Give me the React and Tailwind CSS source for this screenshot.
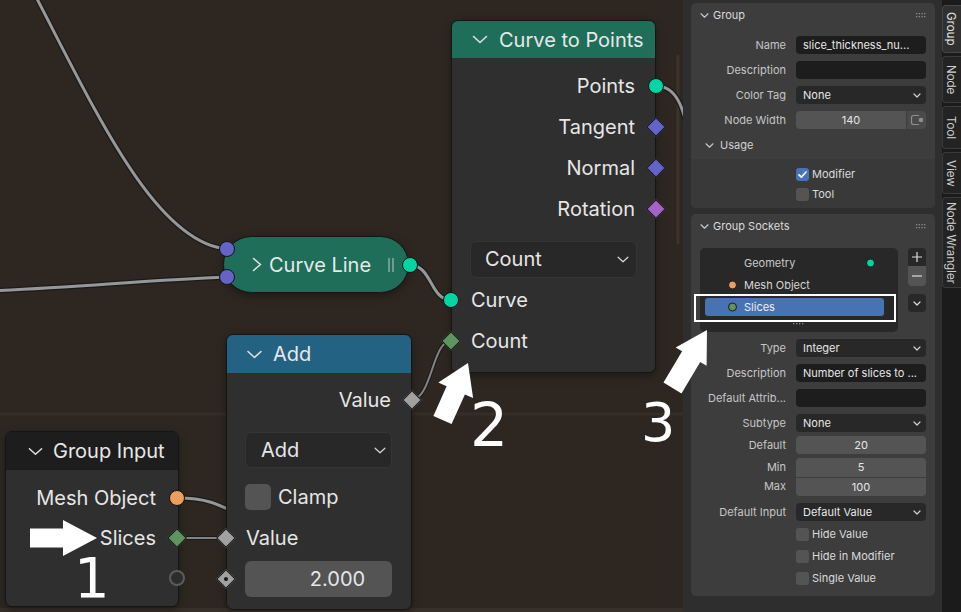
const SOCKET = {
  geo: 'bg-[#00d6a3]',
  vec: 'bg-[#6464c8]',
  rot: 'bg-[#a563c7]',
  int: 'bg-[#5f9460]',
  float: 'bg-[#a1a1a1]',
  obj: 'bg-[#ed9e5c]',
}

function Circle({ color, out }) {
  return (
    <span
      className={`absolute top-1/2 h-[16px] w-[16px] -translate-y-1/2 rounded-full border border-[#141414] ${color} ${out ? 'right-[-9px]' : 'left-[-9px]'}`}
    />
  )
}

function Diamond({ color, out, dot }) {
  return (
    <span
      className={`absolute top-1/2 h-[14px] w-[14px] -translate-y-1/2 rotate-45 border border-[#141414] ${color} ${out ? 'right-[-8px]' : 'left-[-8px]'}`}
    >
      {dot && <span className="absolute left-[4px] top-[4px] h-[4px] w-[4px] rounded-full bg-[#1a1a1a]" />}
    </span>
  )
}

function ChevronDown({ className }) {
  return (
    <svg viewBox="0 0 16 9" className={className} fill="none" stroke="currentColor" strokeWidth="1.6" strokeLinecap="round" strokeLinejoin="round">
      <path d="M1.5 1.5l6.5 6 6.5-6" />
    </svg>
  )
}

function NodeMenu({ label, className }) {
  return (
    <div className={`flex items-center justify-between rounded-[6px] border border-[#353535] bg-[#282828] text-[20px] ${className}`}>
      <span>{label}</span>
      <ChevronDown className="h-[7px] w-[12px] text-[#d8d8d8]" />
    </div>
  )
}

function Links() {
  const links = [
    'M35 -5 C95 110, 155 243, 227 249',
    'M-10 291 C80 287, 150 280, 227 277',
    'M410 265 C432 265, 430 300, 451 300',
    'M656 86 C676 86, 684 105, 692 150',
    'M177 498 C205 498, 215 502, 250 520',
  ]
  const thin = ['M411 400 C432 400, 432 341, 451 341', 'M177 538 L226 538']
  return (
    <svg className="absolute inset-0" width="683" height="612">
      <line x1="0" y1="414" x2="683" y2="414" stroke="#352d27" strokeWidth="3" />
      <rect x="0" y="608" width="683" height="4" fill="#372f29" />
      <line x1="678" y1="56" x2="678" y2="243" stroke="#3b332c" strokeWidth="3" strokeLinecap="round" />
      {links.map((d) => (
        <g key={d} fill="none">
          <path d={d} stroke="#1a1a1a" strokeWidth="5.5" />
          <path d={d} stroke="#979797" strokeWidth="3" />
        </g>
      ))}
      {thin.map((d) => (
        <g key={d} fill="none">
          <path d={d} stroke="#1a1a1a" strokeWidth="4" />
          <path d={d} stroke="#828282" strokeWidth="2" />
        </g>
      ))}
    </svg>
  )
}

function CurveLine() {
  return (
    <div className="absolute left-[223px] top-[236px] flex h-[57px] w-[186px] items-center rounded-full border border-[#141414] bg-[#1e6e5a] pl-[28px] text-[20px] text-[#e8e8e8] shadow-[0_3px_8px_rgba(0,0,0,0.35)]">
      <svg viewBox="0 0 10 15" className="h-[15px] w-[10px]" fill="none" stroke="#e0e0e0" strokeWidth="1.6" strokeLinecap="round" strokeLinejoin="round">
        <path d="M1.5 1.5l7 6-7 6" />
      </svg>
      <span className="ml-[7px]">Curve Line</span>
      <span className="ml-[17px] flex h-[14px] gap-[2px]">
        <span className="w-[2px] bg-[#6e9d90]" />
        <span className="w-[2px] bg-[#6e9d90]" />
      </span>
      <span className={`absolute left-[-5px] top-[4px] h-[16px] w-[16px] rounded-full border border-[#141414] ${SOCKET.vec}`} />
      <span className={`absolute left-[-5px] top-[32px] h-[16px] w-[16px] rounded-full border border-[#141414] ${SOCKET.vec}`} />
      <span className={`absolute right-[-10px] top-[20px] h-[16px] w-[16px] rounded-full border border-[#141414] ${SOCKET.geo}`} />
    </div>
  )
}

function CurveToPoints() {
  const outs = [
    ['Points', <Circle key="c" color={SOCKET.geo} out />],
    ['Tangent', <Diamond key="d" color={SOCKET.vec} out />],
    ['Normal', <Diamond key="d" color={SOCKET.vec} out />],
    ['Rotation', <Diamond key="d" color={SOCKET.rot} out />],
  ]
  return (
    <div className="absolute left-[451px] top-[20px] flex h-[353px] w-[205px] flex-col rounded-[7px] border border-[#151515] bg-[#2f2f2f] text-[20px] shadow-[0_3px_8px_rgba(0,0,0,0.35)]">
      <div className="flex h-[37px] items-center rounded-t-[6px] bg-[#1e6e5a] pl-[20px] text-[#e8e8e8]">
        <ChevronDown className="h-[9px] w-[16px] text-[#e0e0e0]" />
        <span className="ml-[11px]">Curve to Points</span>
      </div>
      <div className="flex flex-col pt-[7.5px]">
        {outs.map(([label, sock]) => (
          <div key={label} className="relative flex h-[41px] items-center justify-end pr-[20px]">
            {label}
            {sock}
          </div>
        ))}
        <div className="h-[50px] px-[18px] pt-[11px]">
          <NodeMenu label="Count" className="h-[37px] pl-[14px] pr-[7px]" />
        </div>
        <div className="relative flex h-[41px] items-center pl-[19px]">
          Curve
          <Circle color={SOCKET.geo} />
        </div>
        <div className="relative flex h-[41px] items-center pl-[19px]">
          Count
          <Diamond color={SOCKET.int} />
        </div>
      </div>
    </div>
  )
}

function AddNode() {
  return (
    <div className="absolute left-[226px] top-[334px] flex h-[276px] w-[186px] flex-col rounded-[7px] border border-[#151515] bg-[#2f2f2f] text-[20px] shadow-[0_3px_8px_rgba(0,0,0,0.35)]">
      <div className="flex h-[38px] items-center rounded-t-[6px] bg-[#246283] pl-[19px] text-[#e8e8e8]">
        <ChevronDown className="h-[9px] w-[17px] text-[#e0e0e0]" />
        <span className="ml-[10px]">Add</span>
      </div>
      <div className="flex flex-col pt-[6.5px]">
        <div className="relative flex h-[41px] items-center justify-end pr-[20px]">
          Value
          <Diamond color={SOCKET.float} out />
        </div>
        <NodeMenu label="Add" className="ml-[18px] mr-[19px] mt-[11.5px] h-[36px] pl-[15px] pr-[5px]" />
        <div className="ml-[18px] mt-[16px] flex h-[26px] items-center">
          <span className="h-[26px] w-[26px] rounded-[5px] bg-[#545454]" />
          <span className="ml-[7px]">Clamp</span>
        </div>
        <div className="relative mt-[7.5px] flex h-[41px] items-center pl-[19px]">
          Value
          <Diamond color={SOCKET.float} />
        </div>
        <div className="relative ml-[18px] mr-[19px] mt-[2.5px] flex h-[36px] items-center justify-center rounded-[6px] bg-[#545454] pl-[38px]">
          2.000
          <span className={`absolute left-[-26px] top-1/2 h-[14px] w-[14px] -translate-y-1/2 rotate-45 border border-[#141414] ${SOCKET.float}`}>
            <span className="absolute left-[4px] top-[4px] h-[4px] w-[4px] rounded-full bg-[#1a1a1a]" />
          </span>
        </div>
      </div>
    </div>
  )
}

function GroupInput() {
  return (
    <div className="absolute left-[5px] top-[431px] flex h-[176px] w-[174px] flex-col rounded-[7px] border border-[#151515] bg-[#2f2f2f] text-[20px] shadow-[0_3px_8px_rgba(0,0,0,0.35)]">
      <div className="flex h-[38px] items-center rounded-t-[6px] bg-[#1d1d1d] pl-[22px] text-[#e8e8e8]">
        <ChevronDown className="h-[9px] w-[15px] text-[#e0e0e0]" />
        <span className="ml-[10px]">Group Input</span>
      </div>
      <div className="flex flex-col pt-[7.5px]">
        <div className="relative flex h-[40px] items-center justify-end pr-[22px]">
          Mesh Object
          <span className={`absolute right-[-7px] top-1/2 h-[16px] w-[16px] -translate-y-1/2 rounded-full border border-[#141414] ${SOCKET.obj}`} />
        </div>
        <div className="relative flex h-[40px] items-center justify-end pr-[22px]">
          Slices
          <span className={`absolute right-[-6px] top-1/2 h-[14px] w-[14px] -translate-y-1/2 rotate-45 border border-[#141414] ${SOCKET.int}`} />
        </div>
        <div className="relative h-[40px]">
          <span className="absolute right-[-7px] top-1/2 h-[16px] w-[16px] -translate-y-1/2 rounded-full border-2 border-[#5c5c5c] bg-[#2c2c2c]" />
        </div>
      </div>
    </div>
  )
}

function NodeCanvas() {
  return (
    <div className="relative h-full w-[683px] shrink-0 overflow-hidden bg-[#2e2721]">
      <Links />
      <CurveLine />
      <CurveToPoints />
      <AddNode />
      <GroupInput />
    </div>
  )
}

function SmallChevron() {
  return (
    <svg viewBox="0 0 9 5" className="h-[5px] w-[9px]" fill="none" stroke="#c8c8c8" strokeWidth="1.2" strokeLinecap="round" strokeLinejoin="round">
      <path d="M1 0.8l3.5 3.4 3.5-3.4" />
    </svg>
  )
}

function Grip({ className }) {
  const dots = []
  for (let i = 0; i < 4; i++) {
    for (let j = 0; j < 2; j++) dots.push(<rect key={`${i}-${j}`} x={i * 2.7} y={j * 3} width="1.3" height="1.3" fill="#8c8c8c" />)
  }
  return (
    <svg width="10" height="5" viewBox="0 0 10 5" className={className}>
      {dots}
    </svg>
  )
}

function PanelHeader({ title }) {
  return (
    <div className="flex h-[24px] items-center pl-[9px] pr-[9px] text-[#dadada]">
      <SmallChevron />
      <span className="ml-[4px]">{title}</span>
      <Grip className="ml-auto" />
    </div>
  )
}

function PropRow({ label, children, className = '' }) {
  return (
    <div className={`flex h-[18px] items-center ${className}`}>
      <span className="w-[95px] whitespace-nowrap text-right text-[#c6c6c6]">{label}</span>
      <div className="ml-[10px] w-[130px]">{children}</div>
    </div>
  )
}

function TextBox({ children }) {
  return <div className="h-[18px] rounded-[4px] bg-[#1d1d1d] px-[7px] leading-[18px] text-[#e6e6e6]">{children}</div>
}

function Menu({ children }) {
  return (
    <div className="flex h-[18px] items-center justify-between rounded-[4px] bg-[#282828] pl-[7px] pr-[5px] text-[#e6e6e6]">
      <span>{children}</span>
      <svg viewBox="0 0 8 5" className="h-[5px] w-[8px]" fill="none" stroke="#d0d0d0" strokeWidth="1.2" strokeLinecap="round" strokeLinejoin="round">
        <path d="M1 1l3 3 3-3" />
      </svg>
    </div>
  )
}

function NumBox({ children, className = 'rounded-[4px]' }) {
  return <div className={`h-[18px] bg-[#545454] text-center leading-[18px] text-[#e6e6e6] ${className}`}>{children}</div>
}

function Check({ children, checked, h = 'h-[20px]' }) {
  return (
    <div className={`flex items-center pl-[105px] ${h}`}>
      {checked ? (
        <span className="flex h-[13px] w-[13px] items-center justify-center rounded-[3px] bg-[#4772b3]">
          <svg viewBox="0 0 13 13" className="h-[13px] w-[13px]" fill="none" stroke="#fff" strokeWidth="1.7" strokeLinecap="round" strokeLinejoin="round">
            <path d="M3 6.8l2.4 2.4L10 4" />
          </svg>
        </span>
      ) : (
        <span className="h-[13px] w-[13px] rounded-[3px] bg-[#545454]" />
      )}
      <span className="ml-[3px] text-[#dadada]">{children}</span>
    </div>
  )
}

function GroupPanel() {
  return (
    <section className="flex h-[205px] flex-col rounded-[5px] bg-[#3d3d3d]">
      <PanelHeader title="Group" />
      <div className="mt-[9px] flex flex-col gap-[7px]">
        <PropRow label="Name">
          <TextBox>slice_thickness_nu...</TextBox>
        </PropRow>
        <PropRow label="Description">
          <TextBox />
        </PropRow>
        <PropRow label="Color Tag">
          <Menu>None</Menu>
        </PropRow>
        <PropRow label="Node Width">
          <div className="flex gap-[1px]">
            <NumBox className="flex-1 rounded-l-[4px]">140</NumBox>
            <div className="flex h-[18px] w-[19px] items-center justify-center rounded-r-[4px] bg-[#4a4a4a]">
              <svg viewBox="0 0 14 12" className="h-[12px] w-[14px]" fill="none">
                <path d="M9 1.5H3.5a2 2 0 0 0-2 2v5a2 2 0 0 0 2 2H9" stroke="#8e8e8e" strokeWidth="1.2" />
                <circle cx="11" cy="6" r="2.3" fill="#8e8e8e" />
              </svg>
            </div>
          </div>
        </PropRow>
      </div>
      <div className="mt-[4px] flex h-[24px] items-center pl-[14px] text-[#d0d0d0]">
        <SmallChevron />
        <span className="ml-[6px]">Usage</span>
      </div>
      <div className="mt-[2px] flex flex-1 flex-col rounded-b-[5px] bg-[#393939] pt-[5px]">
        <Check checked>Modifier</Check>
        <Check>Tool</Check>
      </div>
    </section>
  )
}

function SocketList() {
  return (
    <div className="relative h-[84px] w-[198px] rounded-[5px] bg-[#282828] pt-[4px]">
      <div className="relative mx-[5px] flex h-[22px] items-center pl-[39px] text-[#c8c8c8]">
        Geometry
        <span className="absolute left-[161px] top-1/2 h-[9px] w-[9px] -translate-y-1/2 rounded-full border border-[#1a1a1a] bg-[#00d6a3]" />
      </div>
      <div className="relative mx-[5px] flex h-[22px] items-center pl-[39px] text-[#d6d6d6]">
        <span className="absolute left-[23px] top-1/2 h-[9px] w-[9px] -translate-y-1/2 rounded-full border border-[#1a1a1a] bg-[#ed9e5c]" />
        Mesh Object
      </div>
      <div className="mx-[5px] flex h-[22px] items-center">
        <div className="relative flex h-[18px] w-[179px] items-center rounded-[3px] bg-[#4772b3] pl-[39px] text-[#f0f0f0]">
          <span className="absolute left-[23px] top-1/2 h-[9px] w-[9px] -translate-y-1/2 rounded-full border border-[#1a1a1a] bg-[#5f9460]" />
          Slices
        </div>
      </div>
      <svg width="12" height="2" viewBox="0 0 12 2" className="absolute left-[93px] top-[75px]">
        {[0, 1, 2, 3].map((i) => (
          <rect key={i} x={i * 3} y="0" width="1.3" height="1.3" fill="#8c8c8c" />
        ))}
      </svg>
    </div>
  )
}

function SocketsPanel() {
  return (
    <section className="flex h-[382px] flex-col rounded-[5px] bg-[#3d3d3d]">
      <PanelHeader title="Group Sockets" />
      <div className="mt-[10px] flex pl-[9px]">
        <SocketList />
        <div className="ml-[10px] flex w-[18px] flex-col">
          <div className="flex h-[18px] items-center justify-center rounded-t-[4px] bg-[#282828]">
            <svg viewBox="0 0 10 10" className="h-[10px] w-[10px]" stroke="#dcdcdc" strokeWidth="1.2">
              <path d="M5 0v10M0 5h10" />
            </svg>
          </div>
          <div className="flex h-[20px] items-center justify-center rounded-b-[4px] bg-[#545454]">
            <svg viewBox="0 0 10 2" className="h-[2px] w-[10px]" stroke="#dcdcdc" strokeWidth="1.2">
              <path d="M0 1h10" />
            </svg>
          </div>
          <div className="mt-[8px] flex h-[18px] items-center justify-center rounded-[4px] bg-[#282828]">
            <svg viewBox="0 0 8 5" className="h-[5px] w-[8px]" fill="none" stroke="#dcdcdc" strokeWidth="1.2" strokeLinecap="round" strokeLinejoin="round">
              <path d="M1 1l3 3 3-3" />
            </svg>
          </div>
        </div>
      </div>
      <div className="mt-[7px] flex flex-col gap-[7px]">
        <PropRow label="Type">
          <Menu>Integer</Menu>
        </PropRow>
        <PropRow label="Description">
          <TextBox>Number of slices to ...</TextBox>
        </PropRow>
        <PropRow label="Default Attrib...">
          <TextBox />
        </PropRow>
        <PropRow label="Subtype">
          <Menu>None</Menu>
        </PropRow>
      </div>
      <PropRow className="mt-[4px]" label="Default">
        <NumBox>20</NumBox>
      </PropRow>
      <div className="mt-[4px] flex">
        <div className="flex w-[95px] flex-col text-right text-[#c6c6c6]">
          <span className="h-[19px] leading-[19px]">Min</span>
          <span className="h-[19px] leading-[19px]">Max</span>
        </div>
        <div className="ml-[10px] flex w-[130px] flex-col">
          <div className="h-[19px] rounded-t-[4px] bg-[#545454] text-center leading-[19px] text-[#e6e6e6]">5</div>
          <div className="h-[19px] rounded-b-[4px] border-t border-[#3d3d3d] bg-[#545454] text-center leading-[18px] text-[#e6e6e6]">100</div>
        </div>
      </div>
      <PropRow className="mt-[7px]" label="Default Input">
        <Menu>Default Value</Menu>
      </PropRow>
      <div className="mt-[2px] flex flex-col">
        <Check h="h-[22px]">Hide Value</Check>
        <Check h="h-[22px]">Hide in Modifier</Check>
        <Check h="h-[22px]">Single Value</Check>
      </div>
    </section>
  )
}

function Tabs() {
  const tabs = [
    ['Group', 'h-[48px] bg-[#303030] border-[#474747] text-[#e8e8e8]'],
    ['Node', 'h-[47px] bg-[#232323] border-[#3a3a3a] text-[#cfcfcf]'],
    ['Tool', 'h-[43px] bg-[#232323] border-[#3a3a3a] text-[#cfcfcf]'],
    ['View', 'h-[42px] bg-[#232323] border-[#3a3a3a] text-[#cfcfcf]'],
    ['Node Wrangler', 'h-[91px] bg-[#232323] border-[#3a3a3a] text-[#cfcfcf]'],
  ]
  return (
    <div className="flex h-full w-[19px] flex-col gap-[3px] overflow-hidden bg-[#1b1b1b] pt-[5px] text-[11.5px]">
      {tabs.map(([label, cls]) => (
        <div key={label} className={`flex w-[24px] shrink-0 items-center justify-start rounded-l-[4px] border border-r-0 pl-[1px] ${cls}`}>
          <span className="leading-[14px] [writing-mode:vertical-rl]">{label}</span>
        </div>
      ))}
    </div>
  )
}

function Sidebar() {
  return (
    <div className="flex h-full w-[278px] shrink-0 bg-[#2e2e2e] text-[11px]">
      <div className="flex w-[259px] flex-col gap-[6px] pl-[8px] pr-[7px] pt-[3px]">
        <GroupPanel />
        <SocketsPanel />
      </div>
      <Tabs />
    </div>
  )
}

function arrow(tx, ty, hx, hy, sw, hw, hl) {
  const dx = hx - tx
  const dy = hy - ty
  const len = Math.hypot(dx, dy)
  const ux = dx / len
  const uy = dy / len
  const nx = -uy
  const ny = ux
  const bx = hx - ux * hl
  const by = hy - uy * hl
  const pts = [
    [tx + nx * sw, ty + ny * sw],
    [bx + nx * sw, by + ny * sw],
    [bx + nx * hw, by + ny * hw],
    [hx, hy],
    [bx - nx * hw, by - ny * hw],
    [bx - nx * sw, by - ny * sw],
    [tx - nx * sw, ty - ny * sw],
  ]
  return pts.map((p) => p.map((v) => v.toFixed(1)).join(',')).join(' ')
}

function Annotations() {
  return (
    <div className="pointer-events-none absolute inset-0">
      <svg className="absolute inset-0" width="961" height="612">
        <polygon points={arrow(30, 538, 97, 538, 9.5, 18, 34)} fill="#fff" />
        <polygon points={arrow(442.5, 420, 468, 363, 10, 19, 30)} fill="#fff" />
        <polygon points={arrow(672.5, 388, 707, 330, 10.5, 18, 31)} fill="#fff" />
      </svg>
      <div className="absolute left-[694px] top-[294px] h-[28px] w-[202px] border-2 border-white" />
      <span className="absolute left-[74px] top-[550px] font-['DejaVu_Sans',sans-serif] text-[56px] leading-none text-white">1</span>
      <span className="absolute left-[470px] top-[395px] font-['DejaVu_Sans',sans-serif] text-[60px] leading-none text-white">2</span>
      <span className="absolute left-[641px] top-[396px] font-['DejaVu_Sans',sans-serif] text-[54px] leading-none text-white">3</span>
    </div>
  )
}

export default function App() {
  return (
    <div className="relative flex h-[612px] w-[961px] overflow-hidden bg-[#2e2721] font-['Inter',sans-serif] text-[#e6e6e6]">
      <NodeCanvas />
      <Sidebar />
      <Annotations />
    </div>
  )
}
